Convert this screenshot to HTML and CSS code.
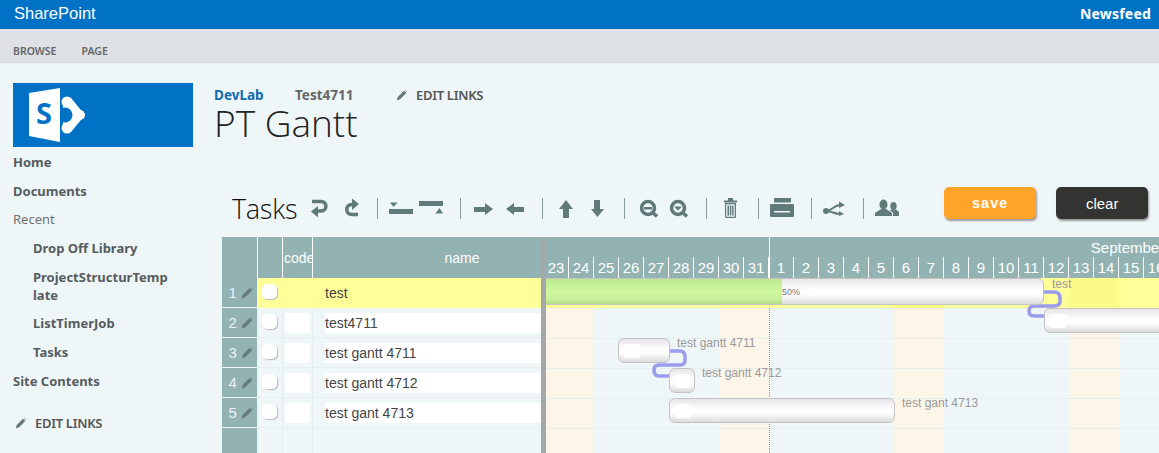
FILE: index.html
```html
<!DOCTYPE html>
<html lang="en">
<head>
    <meta charset="UTF-8">
    <meta name="viewport" content="width=device-width, initial-scale=1.0">
    <title>PT Gantt</title>
    <link rel="stylesheet" href="styles.css">
</head>
<body>
    <div class="suite-bar">
        <span class="suite-name">SharePoint</span>
        <span class="suite-link">Newsfeed</span>
    </div>
    <div class="ribbon">
        <span>BROWSE</span>
        <span>PAGE</span>
    </div>

    <div class="page">
        <div class="side">
            <div class="logo">
                <svg width="180" height="64" viewBox="0 0 180 64">
                    <circle class="logo-white" cx="54" cy="19" r="5.5"/>
                    <circle class="logo-white" cx="67" cy="32" r="5"/>
                    <circle class="logo-white" cx="54" cy="45" r="5.5"/>
                    <path class="logo-white" d="M50 15 58 15 72 32 58 49 50 49Z"/>
                    <circle class="logo-blue" cx="52" cy="32" r="7.500"/>
                    <path class="logo-white" d="M16 10 47 5V59L16 53Z"/>
                    <text class="logo-s" x="31" y="41" text-anchor="middle">S</text>
                </svg>
            </div>
            <nav class="nav">
                <a>Home</a>
                <a>Documents</a>
                <a class="nav-head">Recent</a>
                <a class="nav-sub">Drop Off Library</a>
                <a class="nav-sub">ProjectStructurTemp<br>late</a>
                <a class="nav-sub">ListTimerJob</a>
                <a class="nav-sub">Tasks</a>
                <a>Site Contents</a>
            </nav>
            <div class="edit-links side-edit">
                <svg class="pen" width="12" height="12" viewBox="0 0 12 12"><path d="M1 11 2 8 8 2 10 4 4 10Z M9 1 11 3"/></svg>
                EDIT LINKS
            </div>
        </div>

        <div class="main">
            <div class="crumbs">
                <a class="crumb-home">DevLab</a>
                <a class="crumb">Test4711</a>
                <div class="edit-links">
                    <svg class="pen" width="12" height="12" viewBox="0 0 12 12"><path d="M1 11 2 8 8 2 10 4 4 10Z M9 1 11 3"/></svg>
                    EDIT LINKS
                </div>
            </div>
            <h1 class="title">PT Gantt</h1>

            <div class="toolbar">
                <span class="tasks">Tasks</span>
                <div class="tools">
                    <svg width="20" height="20" viewBox="0 0 20 20"><path class="tool-line" d="M3 3.500H12C18.500 3.500 18.500 13 12 13H8"/><path d="M2 13.500 9 8V19.500Z"/></svg>
                    <svg width="20" height="20" viewBox="0 0 20 20"><path class="tool-line" d="M18 16.500H12C5 16.500 5 6.500 12 6.500H13"/><path d="M12 .5 19 6 12 12Z"/></svg>
                </div>
                <i class="sep"></i>
                <div class="tools tools-tight">
                    <svg width="24" height="16" viewBox="0 0 24 16"><path d="M0 9H24V14H0ZM1 2.500H8.500L4.500 7Z"/></svg>
                    <svg width="24" height="16" viewBox="0 0 24 16"><path d="M0 1H24V6H0ZM16.500 13.500H24L20.500 8Z"/></svg>
                </div>
                <i class="sep"></i>
                <div class="tools">
                    <svg width="22" height="16" viewBox="0 0 22 16"><path d="M2 7H13V3L21 9 13 15V12H2Z"/></svg>
                    <svg width="20" height="16" viewBox="0 0 20 16"><path d="M19 7H9V3L1 9 9 15V12H19Z"/></svg>
                </div>
                <i class="sep"></i>
                <div class="tools tools-wide">
                    <svg width="20" height="20" viewBox="0 0 20 20"><path d="M12 2 19 11H15V20H9V11H5Z"/></svg>
                    <svg width="17" height="20" viewBox="0 0 17 20"><path d="M4 2H10V11H14L7.500 19 1 11H4Z"/></svg>
                </div>
                <i class="sep"></i>
                <div class="tools">
                    <svg width="22" height="20" viewBox="0 0 22 20"><circle class="tool-line" cx="12" cy="10" r="6.500"/><path d="M8 9H16V11.500H8Z"/><path class="tool-line" d="M16.500 14.500 21 18.500"/></svg>
                    <svg width="20" height="20" viewBox="0 0 20 20"><circle class="tool-line" cx="9" cy="10" r="6.500"/><path d="M5 8.500H13L9 12.500Z"/><path class="tool-line" d="M13.500 14.500 18 18.500"/></svg>
                </div>
                <i class="sep"></i>
                <div class="tools">
                    <svg width="23" height="22" viewBox="0 0 23 22"><path fill-rule="evenodd" d="M7 6H18V20Q18 21 17 21H8Q7 21 7 20ZM8.200 7.200V19.800H16.800V7.200Z"/><path d="M6 3.500H19V5.500H6ZM10 1H15V3.500H10ZM9.500 8.500H11V18.500H9.500ZM11.800 8.500H13.300V18.500H11.800ZM14.100 8.500H15.600V18.500H14.100Z"/></svg>
                </div>
                <i class="sep"></i>
                <div class="tools">
                    <svg width="24" height="22" viewBox="0 0 24 22"><path d="M4 1H21V5.500H4Z"/><path fill-rule="evenodd" d="M1 7H23Q24 7 24 8V19Q24 20 23 20H1Q0 20 0 19V8Q0 7 1 7ZM4 14V15.500H20V14Z"/></svg>
                </div>
                <i class="sep"></i>
                <div class="tools">
                    <svg width="23" height="16" viewBox="0 0 23 16"><circle cx="3" cy="11" r="3"/><path class="tool-line thin" d="M3 11C9 11 11 5 17 5M3 11C9 11 11 14 17 14"/><path d="M16 1.500 22 5 16 8ZM16 11 21 14 16 16Z"/></svg>
                </div>
                <i class="sep"></i>
                <div class="tools">
                    <svg width="24" height="18" viewBox="0 0 24 18"><ellipse cx="8.500" cy="5.500" rx="4" ry="5"/><path d="M0 17V14L6 10H11L17 14V17Z"/><ellipse cx="18.500" cy="7" rx="3.200" ry="4"/><path d="M18 17V13.500L14.500 11.500 17 10.500H21L24 13V17Z"/></svg>
                </div>

                <button class="btn btn-save">save</button>
                <button class="btn btn-clear">clear</button>
            </div>

            <div class="gantt">
                <div class="grid">
                    <div class="grid-head">
                        <div class="col-num"></div>
                        <div class="col-check"></div>
                        <div class="col-code">code</div>
                        <div class="col-name">name</div>
                    </div>
                    <div class="grid-row row-active">
                        <div class="col-num">1 <svg class="pen" width="12" height="12" viewBox="0 0 12 12"><path d="M1 11 2 8 8 2 10 4 4 10Z M9 1 11 3"/></svg></div>
                        <div class="col-check"><span class="box"></span></div>
                        <div class="col-code"><span class="cell"></span></div>
                        <div class="col-name"><span class="cell">test</span></div>
                    </div>
                    <div class="grid-row">
                        <div class="col-num">2 <svg class="pen" width="12" height="12" viewBox="0 0 12 12"><path d="M1 11 2 8 8 2 10 4 4 10Z M9 1 11 3"/></svg></div>
                        <div class="col-check"><span class="box"></span></div>
                        <div class="col-code"><span class="cell"></span></div>
                        <div class="col-name"><span class="cell">test4711</span></div>
                    </div>
                    <div class="grid-row">
                        <div class="col-num">3 <svg class="pen" width="12" height="12" viewBox="0 0 12 12"><path d="M1 11 2 8 8 2 10 4 4 10Z M9 1 11 3"/></svg></div>
                        <div class="col-check"><span class="box"></span></div>
                        <div class="col-code"><span class="cell"></span></div>
                        <div class="col-name"><span class="cell">test gantt 4711</span></div>
                    </div>
                    <div class="grid-row">
                        <div class="col-num">4 <svg class="pen" width="12" height="12" viewBox="0 0 12 12"><path d="M1 11 2 8 8 2 10 4 4 10Z M9 1 11 3"/></svg></div>
                        <div class="col-check"><span class="box"></span></div>
                        <div class="col-code"><span class="cell"></span></div>
                        <div class="col-name"><span class="cell">test gantt 4712</span></div>
                    </div>
                    <div class="grid-row">
                        <div class="col-num">5 <svg class="pen" width="12" height="12" viewBox="0 0 12 12"><path d="M1 11 2 8 8 2 10 4 4 10Z M9 1 11 3"/></svg></div>
                        <div class="col-check"><span class="box"></span></div>
                        <div class="col-code"><span class="cell"></span></div>
                        <div class="col-name"><span class="cell">test gant 4713</span></div>
                    </div>
                    <div class="grid-row">
                        <div class="col-num"></div>
                        <div class="col-check"></div>
                        <div class="col-code"></div>
                        <div class="col-name"></div>
                    </div>
                </div>
                <div class="splitter"></div>
                <div class="chart" id="chart"></div>
            </div>
        </div>
    </div>

    <script src="chart.js"></script>
</body>
</html>
```

FILE: styles.css
```css
html, body {
    margin: 0;
    height: 453px;
    overflow: hidden;
}
body {
    background: #eff6f7;
    font-family: "Noto Sans", sans-serif;
    color: #555;
}
.suite-bar {
    height: 29px;
    background: #0072c6;
    color: #fff;
    display: flex;
    justify-content: space-between;
    align-items: center;
    padding: 0 8px 2px 14px;
    box-sizing: border-box;
    font-family: "Liberation Sans", Arial, sans-serif;
}
.suite-name {
    font-size: 16.500px;
}
.suite-link {
    font-family: "Noto Sans", sans-serif;
    font-size: 14px;
    font-weight: 700;
    letter-spacing: 0.2px;
}
.ribbon {
    height: 34px;
    box-sizing: border-box;
    background: #dee1e5;
    border-bottom: 1px solid #d4dadd;
    display: flex;
    gap: 25px;
    align-items: center;
    padding: 10px 0 0 13px;
    font-size: 10.500px;
    font-weight: 600;
    color: #666;
}
.page {
    display: flex;
    padding-top: 20px;
}
.side {
    width: 214px;
    flex: none;
    padding-left: 13px;
    box-sizing: border-box;
}
.logo {
    width: 180px;
    height: 64px;
    background: #0072c6;
    overflow: hidden;
}
.logo svg {
    display: block;
}
.logo-white {
    fill: #fff;
}
.logo-blue {
    fill: #0072c6;
}
.logo-s {
    fill: #0072c6;
    font-family: "Open Sans", sans-serif;
    font-size: 29px;
    font-weight: 700;
}
.nav {
    margin-top: 6px;
    display: flex;
    flex-direction: column;
    font-size: 13px;
    font-weight: 700;
    line-height: 18px;
    color: #555c60;
}
.nav a {
    margin-bottom: 10.700px;
}
.nav .nav-head {
    font-weight: 400;
    color: #707070;
}
.nav .nav-sub {
    margin-left: 20px;
}
.edit-links {
    display: flex;
    align-items: center;
    gap: 8px;
    font-size: 13px;
    font-weight: 600;
    letter-spacing: -0.3px;
    color: #555;
}
.side-edit {
    margin: 13px 0 0 2px;
}
.pen path {
    fill: #66787a;
    stroke: #66787a;
    stroke-width: 0.6;
}
.main {
    flex: none;
    width: 945px;
}
.crumbs {
    display: flex;
    align-items: center;
    height: 24px;
    font-size: 13.500px;
    font-weight: 700;
}
.crumb-home {
    color: #0f6cb3;
    width: 81px;
}
.crumb {
    color: #666;
    width: 101px;
}
.title {
    margin: -2px 0 0;
    font-family: "Open Sans", sans-serif;
    font-size: 37px;
    font-weight: 300;
    line-height: 36px;
    color: #222;
}
.toolbar {
    display: flex;
    align-items: center;
    height: 36px;
    margin: 49px 0 0 18px;
}
.tasks {
    font-family: "Open Sans", sans-serif;
    font-size: 27px;
    font-weight: 300;
    color: #111;
    margin-right: 12px;
    letter-spacing: -0.3px;
}
.tools {
    display: flex;
    align-items: center;
    gap: 11px;
    flex: none;
}
.tools-tight {
    gap: 6px;
}
.tools-wide {
    gap: 16px;
}
.tools svg {
    display: block;
    fill: #607a7a;
    flex: none;
}
.tools .tool-line {
    fill: none;
    stroke: #607a7a;
    stroke-width: 3.500;
}
.tools .thin {
    stroke-width: 2;
}
.sep {
    width: 1px;
    height: 21px;
    background: #85999a;
    margin: 0 11px 0 17px;
    flex: none;
}
.btn {
    width: 92px;
    height: 32px;
    margin-bottom: 10px;
    border: none;
    border-radius: 5px;
    font-family: "Liberation Sans", Arial, sans-serif;
    font-size: 15px;
    color: #fff;
    box-shadow: 1px 2px 2px #999;
    flex: none;
}
.btn-save {
    margin-left: 45px;
    background: #ffa329;
    font-size: 14.500px;
    font-weight: bold;
    letter-spacing: 1px;
}
.btn-clear {
    margin-left: 20px;
    background: #333432;
}
.gantt {
    display: flex;
    margin: 11px 0 0 8px;
    width: 937px;
    height: 216px;
    overflow: hidden;
    font-family: "Liberation Sans", Arial, sans-serif;
}
.grid {
    width: 319px;
    flex: none;
}
.grid-head {
    display: flex;
    height: 41px;
    background: #93b3b3;
    color: #fff;
    font-size: 14px;
    line-height: 43px;
}
.grid-head .col-check,
.grid-head .col-code,
.grid-head .col-name {
    border-left: 1px solid #fff;
}
.grid-head .col-code {
    overflow: hidden;
    white-space: nowrap;
    padding-left: 1px;
}
.grid-head .col-name {
    text-align: center;
    padding-left: 70px;
}
.col-num {
    width: 35px;
    flex: none;
    box-sizing: border-box;
}
.col-check {
    width: 25px;
    flex: none;
    box-sizing: border-box;
}
.col-code {
    width: 30px;
    flex: none;
    box-sizing: border-box;
}
.col-name {
    flex: 1;
    box-sizing: border-box;
}
.grid-row {
    display: flex;
    height: 30px;
    font-size: 14px;
    color: #444;
}
.grid-row .col-num {
    background: #93b3b3;
    border-bottom: 1px solid #eff6f7;
    color: #eef;
    font-size: 15px;
    line-height: 29px;
    text-align: right;
    padding-right: 3px;
}
.grid-row .col-num .pen {
    width: 13px;
    height: 13px;
    vertical-align: -1px;
}
.grid-row .col-check,
.grid-row .col-code,
.grid-row .col-name {
    border-left: 1px solid #e6eeee;
    border-bottom: 1px solid #e6eeee;
}
.cell {
    display: block;
    background: #fff;
    height: 20px;
    line-height: 20px;
    margin-top: 5px;
}
.col-code .cell {
    margin: 5px 2px 0 2px;
    border-radius: 3px;
}
.col-name .cell {
    margin-left: 12px;
}
.box {
    display: block;
    width: 15px;
    height: 15px;
    margin: 6px 0 0 4px;
    background: #fff;
    border-radius: 5px;
    box-shadow: 1px 1px 1px #bbb;
}
.row-active .col-check,
.row-active .col-code,
.row-active .col-name {
    background: #ffff99;
    border-color: #ffff99;
}
.row-active .cell {
    background: transparent;
}
.splitter {
    width: 5px;
    flex: none;
    background: #a4a8a8;
}

.chart {
    position: relative;
    flex: 1;
    overflow: hidden;
}
.chart-head {
    position: absolute;
    left: 0;
    right: 0;
    top: 0;
    height: 41px;
    background: #93b3b3;
}
.month {
    position: absolute;
    top: 0;
    height: 20px;
    line-height: 22px;
    color: #fff;
    font-size: 15px;
    text-align: center;
}
.month-line {
    position: absolute;
    top: 0;
    height: 41px;
    width: 1px;
    background: #fff;
}
.day {
    position: absolute;
    top: 20px;
    height: 21px;
    width: 25px;
    box-sizing: border-box;
    border-right: 1px solid #fff;
    color: #fff;
    font-size: 15px;
    line-height: 22px;
    text-align: center;
}
.weekend {
    position: absolute;
    top: 71px;
    bottom: 0;
    width: 50px;
    background: #fdf6e8;
}
.row-band {
    position: absolute;
    left: 0;
    right: 0;
    top: 41px;
    height: 30px;
    background: #ffff99;
}
.row-band-weekend {
    position: absolute;
    top: 41px;
    height: 30px;
    width: 50px;
    background: #fbfb88;
}
.row-line {
    position: absolute;
    left: 0;
    right: 0;
    height: 1px;
    background: #e6eeee;
}
.today {
    position: absolute;
    top: 71px;
    bottom: 0;
    border-left: 1px dotted #999;
}
.bar {
    position: absolute;
    height: 25px;
    box-sizing: border-box;
    border: 1px solid #c4c4c4;
    border-radius: 6px;
    background: linear-gradient(#e8e4e8, #fdfcfd 40%, #fff 60%, #dcdcdc);
}
.bar-start {
    position: absolute;
    left: 5px;
    top: 5px;
    width: 16px;
    height: 14px;
    background: #fff;
    border-radius: 3px;
}
.progress {
    position: absolute;
    left: 0;
    top: 0;
    bottom: 0;
    border-radius: 5px 0 0 5px;
    background: linear-gradient(#bce88e, #cef8a0 50%, #c8f09a 80%, #b5d98a);
}
.bar-text {
    position: absolute;
    font-size: 12px;
    color: #999;
    white-space: nowrap;
}
.pct {
    font-size: 9px;
    color: #777;
}
.links {
    position: absolute;
    left: 0;
    top: 0;
}
.links path {
    fill: none;
    stroke: #9b9bf0;
    stroke-width: 3.500;
}
```

FILE: chart.js
```js
// draws the timeline from the task list
const chart = document.getElementById('chart');
const DAY = 25;
const ORIGIN = -2; // left edge of aug 23

const tasks = [
    { label: 'test', from: -6, to: 498, row: 0, progress: 241, labelTop: -1, labelLeft: 8 },
    { label: '', from: 498, to: 700, row: 1 },
    { label: 'test gantt 4711', from: 72, to: 124, row: 2 },
    { label: 'test gantt 4712', from: 123, to: 149, row: 3 },
    { label: 'test gant 4713', from: 123, to: 349, row: 4 }
];

function add(className, style, text) {
    const el = document.createElement('div');
    el.className = className;
    Object.assign(el.style, style);
    if (text) el.textContent = text;
    chart.appendChild(el);
    return el;
}

add('row-band', {});
[894, 1069].forEach(x => add('row-band-weekend', { left: x - 546 + 'px' }));
[544, 719, 894, 1069].forEach(x => add('weekend', { left: x - 546 + 'px' }));
[71, 101, 131, 161, 191].forEach(y => add('row-line', { top: y + 'px' }));
add('today', { left: '223px' });

add('chart-head', {});
let x = ORIGIN;
for (let d = 23; d <= 31; d++, x += DAY) {
    add('day', { left: x + 'px' }, String(d));
}
for (let d = 1; d <= 16; d++, x += DAY) {
    add('day', { left: x + 'px' }, String(d));
}
add('month-line', { left: '223px' });
add('month', { left: '223px', width: '717px' }, 'September');

// links go under the bars
const svg = document.createElementNS('http://www.w3.org/2000/svg', 'svg');
svg.setAttribute('class', 'links');
svg.setAttribute('width', '613');
svg.setAttribute('height', '216');
['M498 55H508Q514 55 514 61V64Q514 69 508 69H488Q483 69 483 74Q483 79 488 79H498',
 'M124 114H134Q139 114 139 120V123Q139 128 134 128H113Q108 128 108 133Q108 139 113 139H123'
].forEach(d => {
    const p = document.createElementNS('http://www.w3.org/2000/svg', 'path');
    p.setAttribute('d', d);
    svg.appendChild(p);
});
chart.appendChild(svg);

tasks.forEach(t => {
    const top = 41 + t.row * 30;
    const bar = add('bar', {
        left: t.from + 'px',
        top: top + 'px',
        width: t.to - t.from + 'px',
        height: t.row === 0 ? '27px' : '25px'
    });
    if (t.progress) {
        const p = document.createElement('div');
        p.className = 'progress';
        p.style.width = t.progress + 'px';
        bar.appendChild(p);
        add('bar-text pct', { left: t.progress - 5 + 'px', top: top + 9 + 'px' }, '50%');
    } else {
        const s = document.createElement('div');
        s.className = 'bar-start';
        bar.appendChild(s);
    }
    if (t.label) {
        add('bar-text', {
            left: t.to + (t.labelLeft || 7) + 'px',
            top: top + (t.labelTop === undefined ? -2 : t.labelTop) + 'px'
        }, t.label);
    }
});
```
